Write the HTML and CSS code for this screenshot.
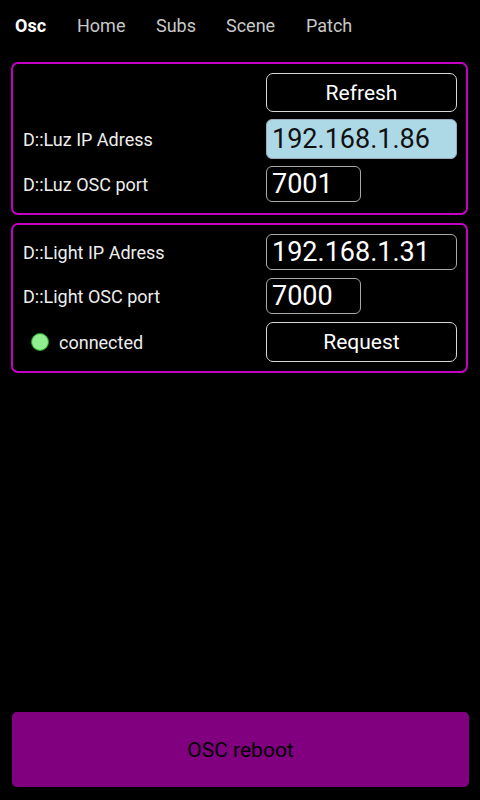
FILE: index.html
```html
<!DOCTYPE html>
<html>
<head>
<meta charset="utf-8">
<link rel="stylesheet" href="styles.css">
</head>
<body>
<div class="app">
  <nav class="tabs">
    <span class="tab active">Osc</span>
    <span class="tab">Home</span>
    <span class="tab">Subs</span>
    <span class="tab">Scene</span>
    <span class="tab">Patch</span>
  </nav>
  <section class="panel panel-luz">
    <span class="label"></span>
    <button class="btn">Refresh</button>
    <span class="label">D::Luz IP Adress</span>
    <div class="field field-wide field-ip active">192.168.1.86</div>
    <span class="label">D::Luz OSC port</span>
    <div class="field field-port">7001</div>
  </section>
  <section class="panel panel-light">
    <span class="label">D::Light IP Adress</span>
    <div class="field field-wide field-ip2">192.168.1.31</div>
    <span class="label">D::Light OSC port</span>
    <div class="field field-port">7000</div>
    <span class="label status"><span class="dot"></span>connected</span>
    <button class="btn">Request</button>
  </section>
  <div class="spacer"></div>
  <button class="reboot">OSC reboot</button>
</div>
</body>
</html>
```
FILE: styles.css
```css
html, body {
  margin: 0;
  padding: 0;
  background: #000;
  height: 100%;
}
body {
  font-family: Roboto, "Noto Sans", sans-serif;
  color: #f0f0f0;
}
.app {
  height: 800px;
  display: flex;
  flex-direction: column;
  box-sizing: border-box;
  padding: 0 12px 13px 11px;
}
.tabs {
  display: flex;
  height: 51px;
  align-items: center;
  padding-left: 4px;
  padding-bottom: 1px;
  box-sizing: border-box;
}
.tab {
  font-size: 18px;
  color: #c8c8c8;
}
.tab.active {
  color: #fff;
  font-weight: bold;
}
.tab:nth-child(1) { width: 62px; }
.tab:nth-child(2) { width: 79px; }
.tab:nth-child(3) { width: 70px; }
.tab:nth-child(4) { width: 80px; }
.panel {
  border: 2.5px solid #c400c4;
  border-radius: 7px;
  display: grid;
  grid-template-columns: 1fr 191px;
  column-gap: 8px;
  align-items: center;
  padding: 0 9px 0 10px;
}
.panel-luz {
  margin-top: 11px;
  height: 153px;
  box-sizing: border-box;
  grid-template-rows: 39px 40px 36px;
  row-gap: 7px;
  padding-top: 9px;
  align-content: start;
}
.panel-light {
  margin-top: 8px;
  height: 150px;
  box-sizing: border-box;
  grid-template-rows: 36px 36px 40px;
  row-gap: 8px;
  padding-top: 9px;
  align-content: start;
}
.label {
  font-size: 18px;
  color: #eee;
}
.btn {
  height: 100%;
  background: #000;
  color: #fff;
  border: 1.5px solid #d8d8d8;
  border-radius: 7px;
  font-family: Roboto, "Noto Sans", sans-serif;
  font-size: 21px;
  padding: 0;
}
.field {
  height: 100%;
  box-sizing: border-box;
  border: 1.5px solid #a8a8a8;
  border-radius: 6px;
  font-size: 27px;
  display: flex;
  align-items: center;
  padding-left: 5px;
  color: #fff;
}
.field-wide { width: 191px; }
.field-port { width: 95px; }
.field.active {
  background: #add8e6;
  color: #111;
  border-color: #9ab;
}
.status {
  display: flex;
  align-items: center;
  padding-left: 8px;
}
.dot {
  width: 16px;
  height: 16px;
  border-radius: 50%;
  background: #90ee90;
  border: 1.5px solid #22a022;
  margin-right: 10px;
}
.spacer { flex: 1; }
.reboot {
  height: 75px;
  width: 457px;
  margin-left: 1px;
  background: #800080;
  border: none;
  border-radius: 5px;
  color: #000;
  font-family: Roboto, "Noto Sans", sans-serif;
  font-size: 21px;
}
```
